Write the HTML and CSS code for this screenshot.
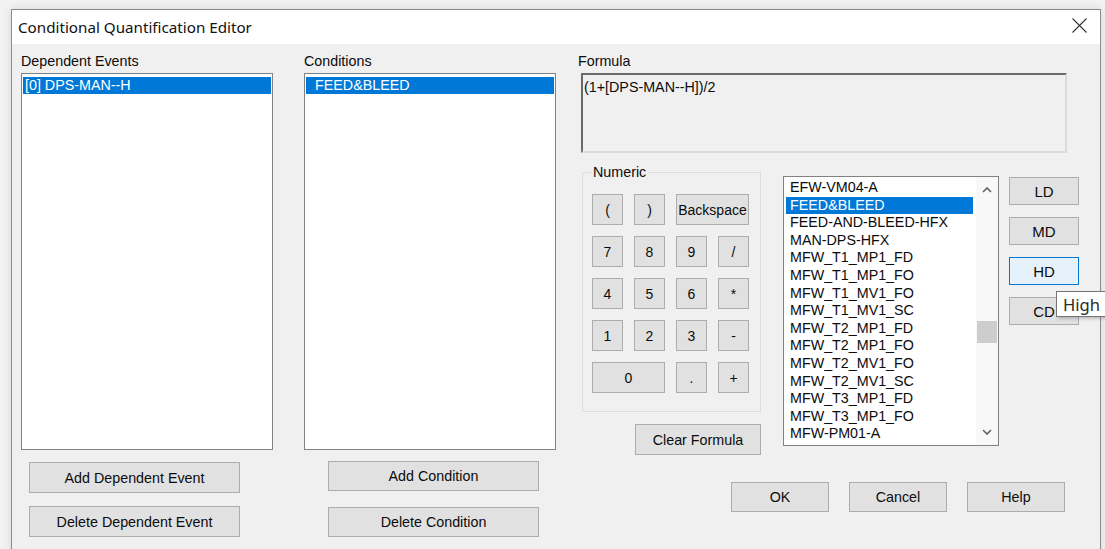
FILE: index.html
```html
<!DOCTYPE html>
<html lang="en">
<head>
<meta charset="utf-8">
<title>Conditional Quantification Editor</title>
<link rel="stylesheet" href="styles.css">
</head>
<body>
<div class="window">
  <div class="titlebar">
    <span class="title">Conditional Quantification Editor</span>
    <svg class="close" viewBox="0 0 15 15" aria-hidden="true"><path d="M0.5 0.5 L14.5 14.5 M14.5 0.5 L0.5 14.5"/></svg>
  </div>

  <div class="content">
    <div class="col col-events">
      <div class="label">Dependent Events</div>
      <div class="listbox tall">
        <div class="item selected">[0] DPS-MAN--H</div>
      </div>
      <button class="btn wide events-add">Add Dependent Event</button>
      <button class="btn wide events-del">Delete Dependent Event</button>
    </div>

    <div class="col col-conds">
      <div class="label">Conditions</div>
      <div class="listbox tall">
        <div class="item selected indent">FEED&amp;BLEED</div>
      </div>
      <button class="btn wide conds-add">Add Condition</button>
      <button class="btn wide conds-del">Delete Condition</button>
    </div>

    <div class="col col-formula">
      <div class="label">Formula</div>
      <div class="formula-box">(1+[DPS-MAN--H])/2</div>

      <div class="lower">
        <div class="numeric-col">
          <div class="group">
            <span class="group-label">Numeric</span>
            <div class="keypad">
              <button class="btn key">(</button>
              <button class="btn key">)</button>
              <button class="btn key span2">Backspace</button>
              <button class="btn key">7</button>
              <button class="btn key">8</button>
              <button class="btn key">9</button>
              <button class="btn key">/</button>
              <button class="btn key">4</button>
              <button class="btn key">5</button>
              <button class="btn key">6</button>
              <button class="btn key">*</button>
              <button class="btn key">1</button>
              <button class="btn key">2</button>
              <button class="btn key">3</button>
              <button class="btn key">-</button>
              <button class="btn key span2">0</button>
              <button class="btn key">.</button>
              <button class="btn key">+</button>
            </div>
          </div>
          <button class="btn clear">Clear Formula</button>
        </div>

        <div class="eventlist">
          <div class="items">
            <div class="item">EFW-VM04-A</div>
            <div class="item selected">FEED&amp;BLEED</div>
            <div class="item">FEED-AND-BLEED-HFX</div>
            <div class="item">MAN-DPS-HFX</div>
            <div class="item">MFW_T1_MP1_FD</div>
            <div class="item">MFW_T1_MP1_FO</div>
            <div class="item">MFW_T1_MV1_FO</div>
            <div class="item">MFW_T1_MV1_SC</div>
            <div class="item">MFW_T2_MP1_FD</div>
            <div class="item">MFW_T2_MP1_FO</div>
            <div class="item">MFW_T2_MV1_FO</div>
            <div class="item">MFW_T2_MV1_SC</div>
            <div class="item">MFW_T3_MP1_FD</div>
            <div class="item">MFW_T3_MP1_FO</div>
            <div class="item">MFW-PM01-A</div>
          </div>
          <div class="scrollbar">
            <div class="arrow"><svg viewBox="0 0 10 6" aria-hidden="true"><polyline points="1,5 5,1 9,5"/></svg></div>
            <div class="track"><div class="thumb"></div></div>
            <div class="arrow"><svg viewBox="0 0 10 6" aria-hidden="true"><polyline points="1,1 5,5 9,1"/></svg></div>
          </div>
        </div>

        <div class="levels">
          <button class="btn level">LD</button>
          <button class="btn level">MD</button>
          <button class="btn level hover">HD</button>
          <button class="btn level">CD</button>
        </div>
      </div>

      <div class="actions">
        <button class="btn action">OK</button>
        <button class="btn action">Cancel</button>
        <button class="btn action">Help</button>
      </div>
    </div>
  </div>

  <div class="tooltip">High</div>
</div>
</body>
</html>
```

FILE: styles.css
```css
* {
  box-sizing: border-box;
}

body {
  margin: 0;
  width: 1105px;
  height: 549px;
  overflow: hidden;
  background: #f3f3f3;
  font-family: "Liberation Sans", Arial, sans-serif;
  font-size: 14.3px;
  color: #0c0c0c;
}

/* dialog frame */
.window {
  position: relative;
  margin: 9px 0 0 11px;
  width: 1090px;
  height: 560px;
  background: #f0f0f0;
  border: 1px solid #8c8c8c;
  border-bottom: none;
  box-shadow: 0 0 10px rgba(0, 0, 0, 0.12);
}

.titlebar {
  height: 34px;
  background: #fff;
  display: flex;
  align-items: center;
  justify-content: space-between;
  padding: 1px 13px 1px 6px;
}

.title {
  font-family: "Noto Sans", "Open Sans", sans-serif;
  font-size: 15.2px;
  color: #111;
}

.close {
  width: 15px;
  height: 15px;
  margin-top: -3px;
  stroke: #333;
  stroke-width: 1.1;
  fill: none;
}

.content {
  display: flex;
  padding: 9px 0 0 9px;
}

.col {
  display: flex;
  flex-direction: column;
  align-items: flex-start;
}

.col-events,
.col-conds {
  width: 252px;
}

.col-conds {
  margin-left: 31px;
}

.col-formula {
  margin-left: 22px;
  flex: 1;
}

.label {
  height: 16px;
  line-height: 16px;
  margin-bottom: 4px;
  white-space: nowrap;
}

/* list boxes */
.listbox {
  background: #fff;
  border: 1px solid #828282;
  width: 100%;
}

.tall {
  height: 377px;
  padding: 3px 1px 0 1px;
}

.item {
  line-height: 17px;
  height: 17px;
  padding-left: 2px;
  white-space: nowrap;
}

.item.indent {
  padding-left: 9px;
}

.item.selected {
  background: #0078d7;
  color: #fff;
}

/* push buttons */
.btn {
  font: inherit;
  color: #0c0c0c;
  background: #e1e1e1;
  border: 1px solid #adadad;
  padding: 0;
  margin: 0;
  display: flex;
  align-items: center;
  justify-content: center;
  white-space: nowrap;
}

.wide {
  width: 211px;
}

.events-add,
.events-del {
  height: 31px;
  margin-left: 8px;
}

.events-add {
  margin-top: 12px;
}

.events-del {
  margin-top: 13px;
}

.conds-add,
.conds-del {
  height: 30px;
  margin-left: 24px;
}

.conds-add {
  margin-top: 11px;
}

.conds-del {
  margin-top: 16px;
}

/* formula area */
.formula-box {
  margin-left: 3px;
  width: 486px;
  height: 80px;
  background: #f0f0f0;
  border: 2px solid;
  border-color: #6a6a6a #dadada #dadada #6a6a6a;
  padding: 4px 1px;
  line-height: 16px;
}

.lower {
  display: flex;
  align-items: flex-start;
  margin-top: 19px;
  margin-left: 4px;
}

.numeric-col {
  width: 179px;
  display: flex;
  flex-direction: column;
  align-items: flex-end;
}

.group {
  position: relative;
  width: 179px;
  height: 240px;
  border: 1px solid #dcdcdc;
  padding: 21px 0 0 9px;
}

.group-label {
  position: absolute;
  top: -9px;
  left: 8px;
  padding: 0 2px;
  line-height: 16px;
  background: #f0f0f0;
}

.keypad {
  display: grid;
  grid-template-columns: repeat(4, 31px);
  grid-auto-rows: 31px;
  column-gap: 11px;
  row-gap: 11px;
}

.key {
  font-size: 14px;
}

.span2 {
  grid-column: span 2;
}

.clear {
  margin-top: 12px;
  width: 126px;
  height: 31px;
}

.eventlist {
  display: flex;
  margin-left: 22px;
  margin-top: 4px;
  width: 216px;
  height: 270px;
  background: #fff;
  border: 1px solid #828282;
}

.eventlist .items {
  width: 192px;
  overflow: hidden;
  padding: 2px 3px 0 2px;
}

.eventlist .item {
  height: 17.6px;
  line-height: 17.6px;
  padding-left: 4px;
}

.scrollbar {
  width: 22px;
  display: flex;
  flex-direction: column;
  align-items: center;
  background: #f8f8f8;
}

.arrow {
  height: 26px;
  width: 100%;
  display: flex;
  align-items: center;
  justify-content: center;
}

.arrow svg {
  width: 10px;
  height: 6px;
  fill: none;
  stroke: #606060;
  stroke-width: 1.6;
}

.track {
  flex: 1;
  width: 100%;
  display: flex;
  justify-content: center;
}

.thumb {
  margin-top: 118px;
  width: 20px;
  height: 22px;
  background: #cdcdcd;
}

.levels {
  margin-left: 10px;
  margin-top: 5px;
  display: flex;
  flex-direction: column;
  gap: 12px;
}

.level {
  width: 70px;
  height: 28px;
  font-size: 15px;
}

.level.hover {
  background: #e5f1fb;
  border-color: #0078d7;
}

.actions {
  align-self: stretch;
  display: flex;
  justify-content: flex-end;
  gap: 20px;
  margin-top: 27px;
  padding-right: 35px;
}

.action {
  width: 98px;
  height: 30px;
}

/* hover hint over the level buttons; runs past the screen edge */
.tooltip {
  position: absolute;
  left: 1044px;
  top: 281px;
  width: 80px;
  height: 26px;
  padding: 0 0 0 6px;
  display: flex;
  align-items: center;
  background: #fff;
  border: 1px solid #767676;
  box-shadow: 2px 2px 3px rgba(0, 0, 0, 0.2);
  font-family: "Noto Sans", "Open Sans", sans-serif;
  font-size: 16.6px;
  color: #2b2b2b;
  white-space: nowrap;
}
```
